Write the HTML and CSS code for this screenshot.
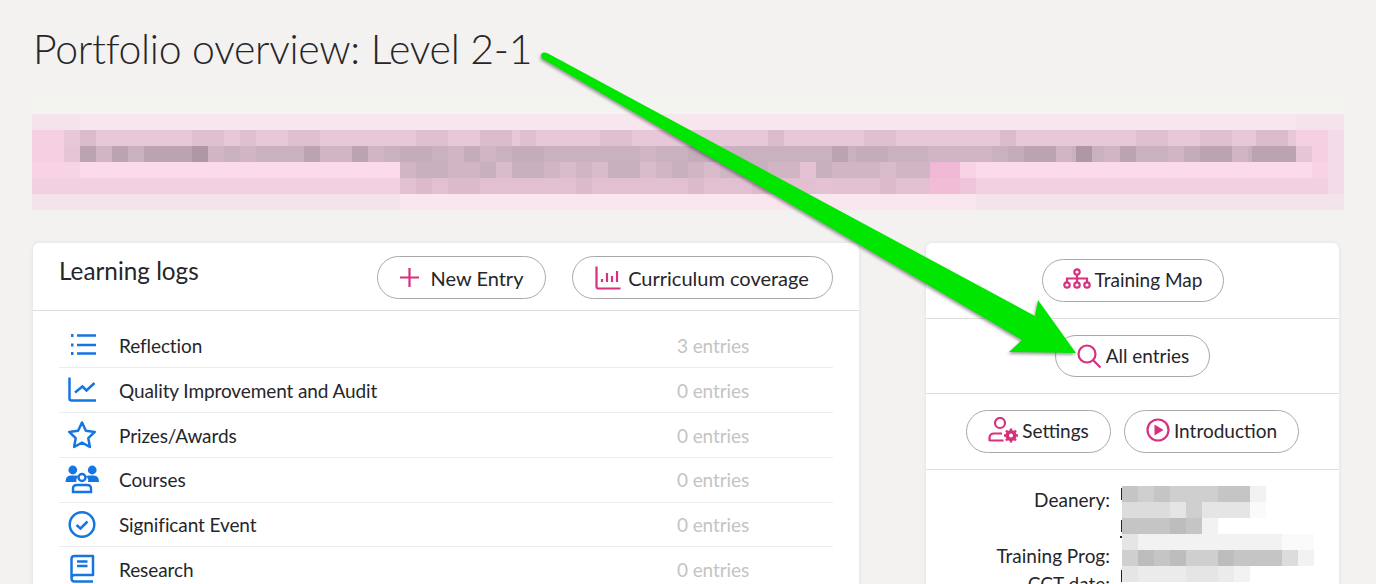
FILE: index.html
```html
<!DOCTYPE html>
<html lang="en">
<head>
<meta charset="utf-8">
<title>Portfolio overview</title>
<link rel="stylesheet" href="styles.css">
</head>
<body>
<div class="page">
  <h1 class="page-title">Portfolio overview: Level 2-1</h1>

  <svg class="banner" viewBox="32 98 1312 114" width="1312" height="114" shape-rendering="crispEdges" aria-hidden="true">
    <rect x="32" y="98" width="1312" height="16" fill="#f3f4ef"/>
    <rect x="32" y="114" width="1312" height="16" fill="#f7e6ee"/>
    <rect x="32" y="130" width="1312" height="16" fill="#e7c7d8"/>
    <rect x="32" y="146" width="1312" height="16" fill="#cab1bf"/>
    <rect x="32" y="162" width="1312" height="16" fill="#fbdaea"/>
    <rect x="400" y="162" width="530" height="16" fill="#d0b6c5"/>
    <rect x="32" y="178" width="1312" height="16" fill="#f3d0e1"/>
    <rect x="400" y="178" width="530" height="16" fill="#e2c0d2"/>
    <rect x="32" y="194" width="368" height="16" fill="#f3e3ea"/>
    <rect x="400" y="194" width="576" height="16" fill="#f9e6ef"/>
    <rect x="976" y="194" width="368" height="16" fill="#f3e3ea"/>
    <rect x="32" y="210" width="1312" height="2" fill="#f2f3ee"/>
    <path fill="#f5d0e3" d="M32 130h32v16h-32zM1296 130h32v16h-32zM32 146h32v16h-32zM1312 146h16v16h-16z"/>
    <path fill="#f3dce8" d="M1328 130h16v48h-16zM1328 178h16v16h-16z"/>
    <path fill="#e6c6d6" d="M64 146h16v16h-16zM1296 146h16v16h-16z"/>
    <path fill="#f7d3e5" d="M32 162h48v16h-48zM1312 162h16v16h-16zM960 162h16v16h-16z"/>
    <path fill="#dcbbcc" d="M80 130h16v16h-16zM304 130h16v16h-16zM480 130h32v16h-32zM768 130h16v16h-16zM1000 130h16v16h-16zM1256 130h32v16h-32z"/>
    <path fill="#e0bfd0" d="M192 130h32v16h-32zM240 130h16v16h-16zM288 130h32v16h-32zM416 130h32v16h-32zM520 130h16v16h-16zM600 130h32v16h-32zM864 130h32v16h-32zM1136 130h32v16h-32zM1200 130h32v16h-32z"/>
    <path fill="#bba3b1" d="M80 146h16v16h-16zM112 146h16v16h-16zM144 146h48v16h-48zM304 146h16v16h-16zM352 146h16v16h-16zM832 146h16v16h-16zM1024 146h32v16h-32zM1120 146h16v16h-16zM1200 146h32v16h-32zM1252 146h44v16h-44z"/>
    <path fill="#b097a5" d="M192 146h16v16h-16zM1076 146h16v16h-16z"/>
    <path fill="#d0b6c4" d="M96 146h16v16h-16zM208 146h16v16h-16zM240 146h16v16h-16zM320 146h32v16h-32zM368 146h16v16h-16zM448 146h16v16h-16zM480 146h16v16h-16zM640 146h16v16h-16zM928 146h64v16h-64zM1056 146h16v16h-16zM1104 146h16v16h-16zM1168 146h16v16h-16zM1232 146h16v16h-16z"/>
    <path fill="#c4acba" d="M400 146h32v16h-32zM464 146h16v16h-16zM512 146h32v16h-32zM688 146h32v16h-32zM856 146h32v16h-32zM1008 146h16v16h-16zM1184 146h16v16h-16z"/>
    <path fill="#c8b0be" d="M416 162h32v16h-32zM480 162h16v16h-16zM512 162h32v16h-32zM608 162h32v16h-32zM672 162h16v16h-16zM752 162h16v16h-16zM816 162h16v16h-16z"/>
    <path fill="#d9bccb" d="M496 162h16v16h-16zM560 162h16v16h-16zM592 162h16v16h-16zM640 162h16v16h-16zM704 162h16v16h-16zM880 162h16v16h-16z"/>
    <path fill="#e4c2d4" d="M800 162h16v16h-16zM816 178h16v16h-16z"/>
    <path fill="#f0b8d4" d="M930 162h30v16h-30z"/>
    <path fill="#f0bdd5" d="M930 178h30v16h-30z"/>
    <path fill="#eec5da" d="M960 178h16v16h-16z"/>
    <path fill="#dcbacb" d="M416 178h16v16h-16zM448 178h32v16h-32zM576 178h16v16h-16zM688 178h16v16h-16zM752 178h16v16h-16zM880 178h16v16h-16z"/>
    <rect x="32" y="114" width="48" height="16" fill="#f4e3ea"/>
    <rect x="1296" y="114" width="48" height="16" fill="#f5e2ea"/>
  </svg>

  <main class="columns">
    <section class="card logs">
      <header class="logs-head">
        <h2 class="logs-title">Learning logs</h2>
        <div class="logs-actions">
          <a class="pill pill-new">
            <svg class="ico" width="21" height="21" viewBox="0 0 21 21"><path d="M10.500 1v19M1 10.500h19"/></svg>
            New Entry
          </a>
          <a class="pill pill-cov">
            <svg class="ico" width="26" height="26" viewBox="0 0 26 26"><path d="M1.500 1.500v20q0 2 2 2h22M7 17v-3M12 17V8M17 17v-6M22 17V6"/></svg>
            Curriculum coverage
          </a>
        </div>
      </header>
      <ul class="log-list">
        <li class="log-row">
          <svg class="log-ico" width="36" height="36" viewBox="0 0 36 36"><path d="M13 7.500h19M13 17h19M13 25.500h19"/><path class="dots" d="M7 7.500h2.500M7 17h2.500M7 25.500h2.500"/></svg>
          <span class="log-name">Reflection</span><span class="log-count">3 entries</span>
        </li>
        <li class="log-row">
          <svg class="log-ico" width="36" height="36" viewBox="0 0 36 36"><path d="M5.500 5.500v21q0 2 2 2h24.500M11 20.500l7.500-6 4 4 8-7.500"/></svg>
          <span class="log-name">Quality Improvement and Audit</span><span class="log-count">0 entries</span>
        </li>
        <li class="log-row">
          <svg class="log-ico" width="36" height="36" viewBox="0 0 36 36"><path stroke-linejoin="round" d="M18 5.500l3.900 8.200 8.900 1.200-6.500 6.200 1.600 8.900-7.900-4.300-7.900 4.300 1.600-8.900-6.500-6.200 8.900-1.200z"/></svg>
          <span class="log-name">Prizes/Awards</span><span class="log-count">0 entries</span>
        </li>
        <li class="log-row">
          <svg class="log-ico" width="36" height="36" viewBox="0 0 36 36"><circle class="solid" cx="8.800" cy="8" r="4.400"/><circle class="solid" cx="28.200" cy="8" r="4.400"/><path class="solid" d="M1.500 20q0-6.500 5-6.500h5q2.500 0 3 1-3 2-2 5.500zM35 20q0-6.500-5-6.500h-5q-2.500 0-3 1 3 2 2 5.500z"/><circle cx="18" cy="15.500" r="3.500"/><path stroke-width="2.400" d="M9 30v-3.500q0-3.500 4-3.500h10q4 0 4 3.500V30z"/></svg>
          <span class="log-name">Courses</span><span class="log-count">0 entries</span>
        </li>
        <li class="log-row">
          <svg class="log-ico" width="36" height="36" viewBox="0 0 36 36"><circle cx="18" cy="17.500" r="12.300"/><path d="M12.500 18l4 3.500 7-7"/></svg>
          <span class="log-name">Significant Event</span><span class="log-count">0 entries</span>
        </li>
        <li class="log-row">
          <svg class="log-ico" width="36" height="36" viewBox="0 0 36 36"><path stroke-linejoin="round" d="M7.500 27V8q0-3 3-3H29v19H10.500q-3 0-3 3 0 3.500 3 3.500H29M13 10.500h10.500M13 15h10.500"/></svg>
          <span class="log-name">Research</span><span class="log-count">0 entries</span>
        </li>
      </ul>
    </section>

    <aside class="card side">
      <div class="side-row side-row-map">
        <a class="pill pill-map">
          <svg class="ico" width="28" height="22" viewBox="0 0 28 22"><circle cx="14" cy="4" r="2.700"/><circle cx="4" cy="17" r="2.700"/><circle cx="14" cy="17" r="2.700"/><circle cx="24" cy="17" r="2.700"/><path d="M14 7v7M4 14v-3.500h20V14"/></svg>
          Training Map
        </a>
      </div>
      <div class="side-row side-row-all">
        <a class="pill pill-all">
          <svg class="ico" width="26" height="26" viewBox="0 0 26 26"><circle cx="11" cy="11" r="8.500"/><path d="M17 17l7.500 7.500"/></svg>
          All entries
        </a>
      </div>
      <div class="side-row side-row-pair">
        <a class="pill pill-set">
          <svg class="ico" width="30" height="26" viewBox="0 0 30 26"><circle cx="12" cy="6" r="5"/><path d="M1.500 24v-3q0-4.500 4.500-4.500h8M1.500 23.500h14"/><circle class="solid" cx="23" cy="18.500" r="5.500"/><path class="gear" d="M23 11.500v14M16 18.500h14M18 13.500l10 10M28 13.500l-10 10"/><circle class="hole" cx="23" cy="18.500" r="2"/></svg>
          Settings
        </a>
        <a class="pill pill-intro">
          <svg class="ico" width="24" height="24" viewBox="0 0 24 24"><circle cx="12" cy="12" r="10.500"/><path class="solid" d="M8.500 6.500l9 5.500-9 5.500z"/></svg>
          Introduction
        </a>
      </div>
      <dl class="details">
        <div class="detail detail-tall"><dt>Deanery:</dt></div>
        <div class="detail"><dt>Training Prog:</dt></div>
        <div class="detail"><dt>CCT date:</dt></div>
        <svg class="mosaic" viewBox="-2 0 194 98" width="194" height="98" shape-rendering="crispEdges" aria-hidden="true">
          <path fill="#26262a" d="M-1 2h1v12h-1zM-1 34h1v12h-1zM-2 50h2v2h-2zM-1 84h1v12h-1z"/>
          <path fill="#c5c5c5" d="M0 0h16v16H0zM32 0h16v16H32zM96 0h32v16H96zM0 32h48v16H0zM64 32h16v16H64zM32 64h16v16H32zM112 64h48v16h-48z"/>
          <path fill="#cfcfcf" d="M16 0h16v16H16zM48 0h48v16H48zM64 16h16v16H64zM0 64h16v16H0zM64 64h32v16H64z"/>
          <path fill="#dcdcdc" d="M0 16h48v16H0zM160 64h16v16h-16z"/>
          <path fill="#e5e5e5" d="M48 16h16v16H48zM80 16h48v16H80zM0 48h16v16H0zM0 80h16v16H0zM64 80h32v16H64z"/>
          <path fill="#bdbdbd" d="M48 32h16v16H48zM16 64h16v16H16zM96 64h16v16H96zM48 64h16v16H48z"/>
          <path fill="#f2f2f2" d="M128 0h16v16h-16zM80 32h16v16H80zM16 48h144v16H16zM176 64h16v16h-16zM112 80h16v16h-16z"/>
          <path fill="#ebebeb" d="M16 80h48v16H16zM96 80h16v16H96z"/>
          <path fill="#fafafa" d="M128 16h16v16h-16zM160 48h32v16h-32z"/>
        </svg>
      </dl>
    </aside>
  </main>

  <svg class="arrow" viewBox="0 0 1376 584" width="1376" height="584" aria-hidden="true">
    <path class="arrow-shape" d="M541.500 57.500Q540 53 544 52.500Q546 52.500 548 53.500L1035 316L1038 300L1076 353L1009 352L1022 340L543 59Q542 58.500 541.500 57.500Z"/>
  </svg>
</div>
</body>
</html>
```
FILE: styles.css
```css
* { box-sizing: border-box; }
html, body { margin: 0; padding: 0; height: 100%; overflow: hidden; }
body {
  background: #f3f2f0;
  color: #26262a;
  font-family: "Lato", "Liberation Sans", sans-serif;
}
.page {
  position: relative;
  width: 1376px;
  height: 584px;
  overflow: hidden;
  padding-top: 22px;
}
.page-title {
  margin: 0 0 0 33px;
  height: 76px;
  font-size: 41px;
  line-height: 54px;
  letter-spacing: -0.3px;
  font-weight: 300;
  color: #26262a;
}
.banner { display: block; margin-left: 32px; }
.columns {
  display: flex;
  gap: 67px;
  margin: 31px 0 0 33px;
}
.card {
  background: #fff;
  border-radius: 6px;
  box-shadow: 0 0 4px rgba(0, 0, 0, 0.08);
}
.logs { width: 826px; height: 400px; }
.side { width: 413px; height: 400px; }

.logs-head {
  display: flex;
  justify-content: space-between;
  height: 68px;
  padding: 13px 26px 0 26px;
  border-bottom: 1px solid #dedede;
}
.logs-title {
  margin: -1px 0 0 0;
  font-size: 24.300px;
  line-height: 32px;
  font-weight: 400;
}
.logs-actions { display: flex; gap: 26px; }

.pill {
  display: inline-flex;
  align-items: center;
  justify-content: center;
  height: 43px;
  border: 1px solid #a9a9a9;
  border-radius: 22px;
  background: #fff;
  font-size: 20px;
  color: #26262a;
  white-space: nowrap;
}
.side .pill { font-size: 19px; padding-bottom: 3px; }
.side .pill-all { padding-bottom: 1px; }
.ico {
  fill: none;
  stroke: #d6307f;
  stroke-width: 2.200;
  flex: none;
}
.ico .solid { fill: #d6307f; stroke: none; }
.ico .gear { stroke-width: 2.400; }
.ico .hole { fill: #fff; stroke: none; }

.pill-new { width: 169px; gap: 11px; padding-right: 1px; }
.pill-cov { width: 261px; gap: 7px; padding-right: 1px; }
.pill-map { width: 182px; gap: 4px; }
.pill-all { width: 155px; height: 42px; gap: 4px; }
.pill-set { width: 145px; gap: 4px; }
.pill-intro { width: 175px; gap: 4px; }

.log-list { list-style: none; margin: 12.700px 26px 0 26px; padding: 0; }
.log-row {
  display: flex;
  align-items: center;
  height: 44.750px;
  padding-left: 5px;
  border-bottom: 1px solid #ececec;
  font-size: 19px;
  letter-spacing: -0.1px;
}
.log-ico {
  flex: none;
  margin-right: 19px;
  fill: none;
  stroke: #1576e2;
  stroke-width: 2.500;
}
.log-ico .solid { fill: #1576e2; stroke: none; }
.log-ico .dots { stroke-width: 2.800; }
.log-name { flex: 1; }
.log-count {
  width: 156px;
  color: #c4c4c4;
}

.side-row {
  display: flex;
  justify-content: center;
  border-bottom: 1px solid #dedede;
}
.side-row-map { height: 76px; padding-top: 16px; }
.side-row-all { height: 75px; padding-top: 16px; }
.side-row-pair { height: 76px; gap: 13px; padding-top: 16px; }

.details {
  position: relative;
  margin: 16px 0 0 0;
}
.detail {
  display: flex;
  justify-content: flex-end;
  width: 184px;
  height: 28px;
  font-size: 19px;
  line-height: 28px;
}
.detail-tall { height: 56px; }
.detail dt { margin: 0; }
.mosaic {
  position: absolute;
  left: 194px;
  top: 0;
}
.arrow {
  position: absolute;
  left: 0;
  top: 0;
  pointer-events: none;
}
.arrow-shape {
  fill: #00e600;
  filter: drop-shadow(-1px 2px 1.500px rgba(60, 40, 60, 0.45));
}
```
